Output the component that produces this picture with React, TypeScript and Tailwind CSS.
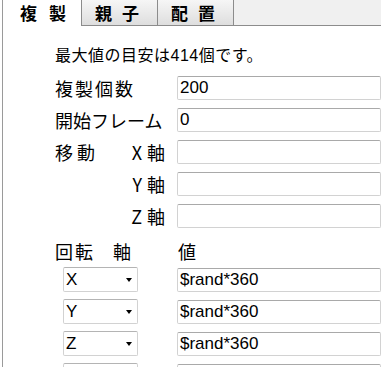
import { useState } from 'react';

const jp = { fontFamily: '"Noto Sans CJK JP", "Noto Sans", sans-serif' };
const latin = { fontFamily: '"Liberation Sans", "Noto Sans CJK JP", sans-serif' };

function Field({ value = '' }: { value?: string }) {
  return (
    <div
      className="h-[24px] w-[204px] rounded-[2px] border border-[#d2d2d2] border-t-[#a9a9a9] bg-white pl-[2px] text-[17px] leading-[22px] text-black"
      style={latin}
    >
      {value}
    </div>
  );
}

function AxisSelect({ axis }: { axis: string }) {
  return (
    <div
      className="ml-[8px] flex h-[25px] w-[75px] items-center justify-between rounded-[2px] border border-[#d2d2d2] border-t-[#b4b4b4] bg-white pl-[2px] pr-[5px] text-[17px] text-black"
      style={latin}
    >
      <span>{axis}</span>
      {axis && <span className="h-0 w-0 border-x-[3px] border-t-[4px] border-x-transparent border-t-black" />}
    </div>
  );
}

export default function App() {
  const [tab] = useState(0);
  const tabs = ['複製', '親子', '配置'];

  return (
    <div className="h-[367px] w-[381px] overflow-hidden bg-white pl-[2px]" style={jp}>
      <div className="h-full border-l border-[#9a9a9a]">
        {/* tab strip */}
        <div className="flex h-[26px]">
          {tabs.map((t, i) =>
            i === tab ? (
              <div key={t} className="w-[78px] bg-white pl-[17px] text-[17px] font-bold leading-[26px] tracking-[12px] text-black">
                {t}
              </div>
            ) : (
              <div
                key={t}
                className="w-[76px] border-b border-l border-[#8c8c8c] bg-gradient-to-b from-[#f6f6f6] to-[#dedede] pl-[13px] text-[17px] font-bold leading-[25px] tracking-[10px] text-black"
              >
                {t}
              </div>
            )
          )}
          <div className="flex-1 border-b border-l border-[#8c8c8c] bg-[#f0f0f0]" />
        </div>

        <div className="pl-[52px] text-black">
          <div className="mt-[18px] text-[16px] leading-[20px] tracking-[0.5px]">
            最大値の目安は<span style={latin} className="text-[16px]">414</span>個です。
          </div>

          <div className="mt-[10px] grid grid-cols-[122px_204px] items-center gap-y-[8px] text-[18px] leading-[24px]">
            <div className="tracking-[2px]">複製個数</div>
            <Field value="200" />
            <div>開始フレーム</div>
            <Field value="0" />
            <div className="flex justify-between pr-[12px]">
              <span className="tracking-[4px]">移動</span>
              <span>
                <span className="mr-[5px]">X</span>軸
              </span>
            </div>
            <Field />
            <div className="pr-[12px] text-right">
              <span className="mr-[5px]">Y</span>軸
            </div>
            <Field />
            <div className="pr-[12px] text-right">
              <span className="mr-[5px]">Z</span>軸
            </div>
            <Field />
          </div>

          <div className="mt-[12px] grid grid-cols-[122px_204px] items-center text-[18px] leading-[22px]">
            <div className="flex">
              <span className="w-[58px] tracking-[2px]">回転</span>
              <span>軸</span>
            </div>
            <div className="pl-[1px]">値</div>
          </div>

          <div className="mt-[5px] grid grid-cols-[122px_204px] items-center gap-y-[7px]">
            {['X', 'Y', 'Z', ''].map((a) => (
              <div key={a} className="contents">
                <AxisSelect axis={a} />
                <Field value={a ? '$rand*360' : ''} />
              </div>
            ))}
          </div>
        </div>
      </div>
    </div>
  );
}
